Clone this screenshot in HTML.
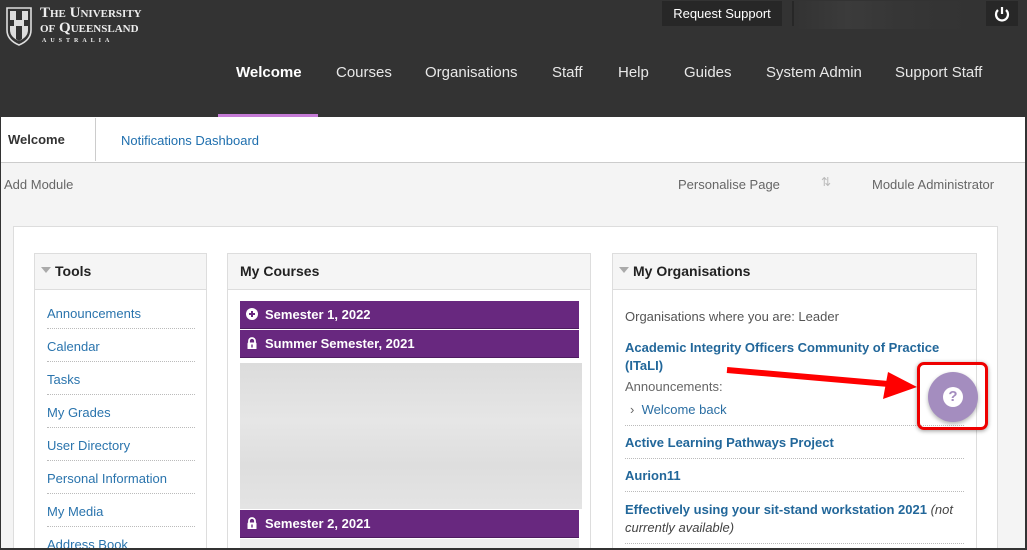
<!DOCTYPE html>
<html style="overflow:hidden;width:1027px;height:550px"><head><meta charset="utf-8"><style>
*{margin:0;padding:0;box-sizing:border-box}
body{width:1027px;height:550px;overflow:hidden;background:#f4f4f4;font-family:"Liberation Sans",sans-serif;position:relative}
.a{position:absolute}
#frame{position:absolute;left:0;top:0;width:1027px;height:550px;border:1px solid #333;border-right:2px solid #333;border-bottom:2px solid #333;pointer-events:none;z-index:9}
.hdr{left:0;top:0;width:1027px;height:117px;background:#333}
.nav{top:64px;color:#e8e8e8;font-size:15px}
.link{color:#1f6fae;font-size:13px}
.tools a{display:block;position:absolute;left:12px;width:148px;color:#2a74ad;font-size:13px;text-decoration:none;height:24px;line-height:17px;border-bottom:1px dotted #bbb}
.bar{left:240px;width:339px;height:28px;background:#68287f;color:#fff;font-weight:bold;font-size:13px;line-height:27px;padding-left:25px;border-bottom:1px solid #4e1c60}
.ic{position:absolute;left:6px;top:7px;width:12px;height:12px}
.org{position:absolute;left:12px;width:339px;color:#22679a;font-weight:bold;font-size:13px}
.dot{position:absolute;left:12px;width:339px;border-top:1px dotted #bbb}
</style></head><body>
<div id="frame"></div>
<div class="a hdr"></div>
<svg class="a" style="left:5px;top:6px" width="28" height="40" viewBox="0 0 28 40"><path d="M2 2H26V24Q26 34 14 39Q2 34 2 24Z" fill="none" stroke="#ddd" stroke-width="1.6"/><path d="M5 5H23V24Q23 31 14 35Q5 31 5 24Z" fill="#ddd"/><path d="M11 5H17V14H23V20H17V33L14 35L11 33V20H5V14H11Z" fill="#333"/><rect x="9" y="14" width="10" height="6" fill="#ddd"/></svg>
<div class="a" style="left:40px;top:6px;color:#eee;font-family:'Liberation Serif',serif;font-size:15px;line-height:15px;font-weight:bold;font-variant:small-caps">The University<br>of Queensland</div>
<div class="a" style="left:42px;top:38px;color:#eee;font-family:'Liberation Serif',serif;font-size:6px;letter-spacing:4px;font-weight:bold">AUSTRALIA</div>
<div class="a" style="left:662px;top:1px;width:120px;height:25px;background:#272727;color:#fff;font-size:13px;text-align:center;line-height:25px">Request Support</div>
<div class="a" style="left:792px;top:1px;width:2px;height:25px;background:#272727"></div>
<div class="a" style="left:796px;top:1px;width:172px;height:28px;background:linear-gradient(90deg,#333,#3b3b3b 30%,#363636 60%,#333)"></div>
<div class="a" style="left:986px;top:1px;width:32px;height:25px;background:#272727"></div>
<svg class="a" style="left:992px;top:4px" width="20" height="20" viewBox="0 0 20 20"><path d="M6 6A6 6 0 1 0 14 6" fill="none" stroke="#fff" stroke-width="2.2"/><path d="M10 3V10" stroke="#fff" stroke-width="2.2"/></svg>
<div class="a nav" style="left:236px;font-weight:bold;color:#fff">Welcome</div>
<div class="a nav" style="left:336px">Courses</div>
<div class="a nav" style="left:425px">Organisations</div>
<div class="a nav" style="left:552px">Staff</div>
<div class="a nav" style="left:618px">Help</div>
<div class="a nav" style="left:684px">Guides</div>
<div class="a nav" style="left:766px">System Admin</div>
<div class="a nav" style="left:895px">Support Staff</div>
<div class="a" style="left:218px;top:114px;width:100px;height:3px;background:#c57bd6"></div>
<div class="a" style="left:0;top:117px;width:1027px;height:46px;background:#fff;border-bottom:1px solid #ccc"></div>
<div class="a" style="left:8px;top:132px;font-weight:bold;font-size:13px;color:#333">Welcome</div>
<div class="a" style="left:95px;top:118px;width:1px;height:43px;background:#ccc"></div>
<div class="a link" style="left:121px;top:133px">Notifications Dashboard</div>
<div class="a" style="left:4px;top:177px;font-size:13px;color:#666">Add Module</div>
<div class="a" style="left:678px;top:177px;font-size:13px;color:#666">Personalise Page</div>
<div class="a" style="left:821px;top:175px;font-size:12px;color:#bbb">⇅</div>
<div class="a" style="left:872px;top:177px;font-size:13px;color:#666">Module Administrator</div>
<div class="a" style="left:13px;top:226px;width:985px;height:330px;background:#fff;border:1px solid #ddd"></div>
<div class="a tools" style="left:34px;top:253px;width:173px;height:300px;border:1px solid #ddd">
<div style="height:36px;background:#f5f5f5;border-bottom:1px solid #ddd;position:relative"><span style="position:absolute;left:6px;top:13px;border:5px solid transparent;border-top:6px solid #aaa"></span><span style="position:absolute;left:20px;top:9px;font-weight:bold;font-size:14px;color:#222">Tools</span></div>
<a style="top:51px">Announcements</a><a style="top:84px">Calendar</a><a style="top:117px">Tasks</a><a style="top:150px">My Grades</a><a style="top:183px">User Directory</a><a style="top:216px">Personal Information</a><a style="top:249px">My Media</a><a style="top:282px;border:0">Address Book</a>
</div>
<div class="a" style="left:227px;top:253px;width:364px;height:300px;border:1px solid #ddd">
<div style="height:36px;background:#f5f5f5;border-bottom:1px solid #ddd;padding:9px 0 0 12px;font-weight:bold;font-size:14px;color:#222">My Courses</div></div>
<div class="a bar" style="top:301px"><svg class="ic" viewBox="0 0 12 12"><circle cx="6" cy="6" r="6" fill="#fff"/><path d="M6 3V9M3 6H9" stroke="#68287f" stroke-width="2"/></svg>Semester 1, 2022</div>
<div class="a bar" style="top:330px"><svg class="ic" viewBox="0 0 12 12"><path d="M3 6V4A3 3 0 0 1 9 4V6" fill="none" stroke="#fff" stroke-width="1.8"/><rect x="1.5" y="5.5" width="9" height="7" rx="1" fill="#fff"/><rect x="5.3" y="7.5" width="1.4" height="3" fill="#68287f"/></svg>Summer Semester, 2021</div>
<div class="a" style="left:240px;top:363px;width:342px;height:146px;background:linear-gradient(180deg,#dcdcdc,#e6e6e6 40%,#dedede 70%,#e4e4e4)"></div>
<div class="a bar" style="top:510px"><svg class="ic" viewBox="0 0 12 12"><path d="M3 6V4A3 3 0 0 1 9 4V6" fill="none" stroke="#fff" stroke-width="1.8"/><rect x="1.5" y="5.5" width="9" height="7" rx="1" fill="#fff"/><rect x="5.3" y="7.5" width="1.4" height="3" fill="#68287f"/></svg>Semester 2, 2021</div>
<div class="a" style="left:240px;top:539px;width:339px;height:10px;background:#efefef"></div>
<div class="a" style="left:612px;top:253px;width:365px;height:300px;border:1px solid #ddd">
<div style="height:36px;background:#f5f5f5;border-bottom:1px solid #ddd;position:relative"><span style="position:absolute;left:6px;top:13px;border:5px solid transparent;border-top:6px solid #aaa"></span><span style="position:absolute;left:20px;top:9px;font-weight:bold;font-size:14px;color:#222">My Organisations</span></div>
<div style="position:absolute;left:12px;top:55px;font-size:13px;color:#555">Organisations where you are: Leader</div>
<div class="org" style="top:85px;line-height:18px">Academic Integrity Officers Community of Practice (ITaLI)</div>
<div style="position:absolute;left:12px;top:125px;font-size:13px;color:#666">Announcements:</div>
<div style="position:absolute;left:17px;top:148px;font-size:13px;color:#666">›&nbsp;&nbsp;<span style="color:#2a6ea3">Welcome back</span></div>
<div class="dot" style="top:171px"></div>
<div class="org" style="top:181px">Active Learning Pathways Project</div>
<div class="dot" style="top:204px"></div>
<div class="org" style="top:214px">Aurion11</div>
<div class="dot" style="top:237px"></div>
<div class="org" style="top:247px;line-height:18px">Effectively using your sit-stand workstation 2021 <i style="font-weight:normal;color:#444">(not currently available)</i></div>
<div class="dot" style="top:289px"></div>
</div>
<svg class="a" style="left:720px;top:360px" width="200" height="50" viewBox="0 0 200 50"><path d="M7 10L180 25" stroke="#f00" stroke-width="6"/><path d="M168 12L197 27L163 39Z" fill="#f00"/></svg>
<div class="a" style="left:917px;top:362px;width:71px;height:68px;border:3px solid #e00;border-radius:7px;box-shadow:0 1px 4px rgba(0,0,0,.4)"></div>
<div class="a" style="left:928px;top:372px;width:50px;height:50px;border-radius:50%;background:#a48dbf;box-shadow:0 2px 4px rgba(0,0,0,.3)"></div>
<div class="a" style="left:943px;top:387px;width:20px;height:20px;border-radius:50%;background:#fff;color:#a48dbf;font-weight:bold;font-size:15px;text-align:center;line-height:20px">?</div>
</body></html>
